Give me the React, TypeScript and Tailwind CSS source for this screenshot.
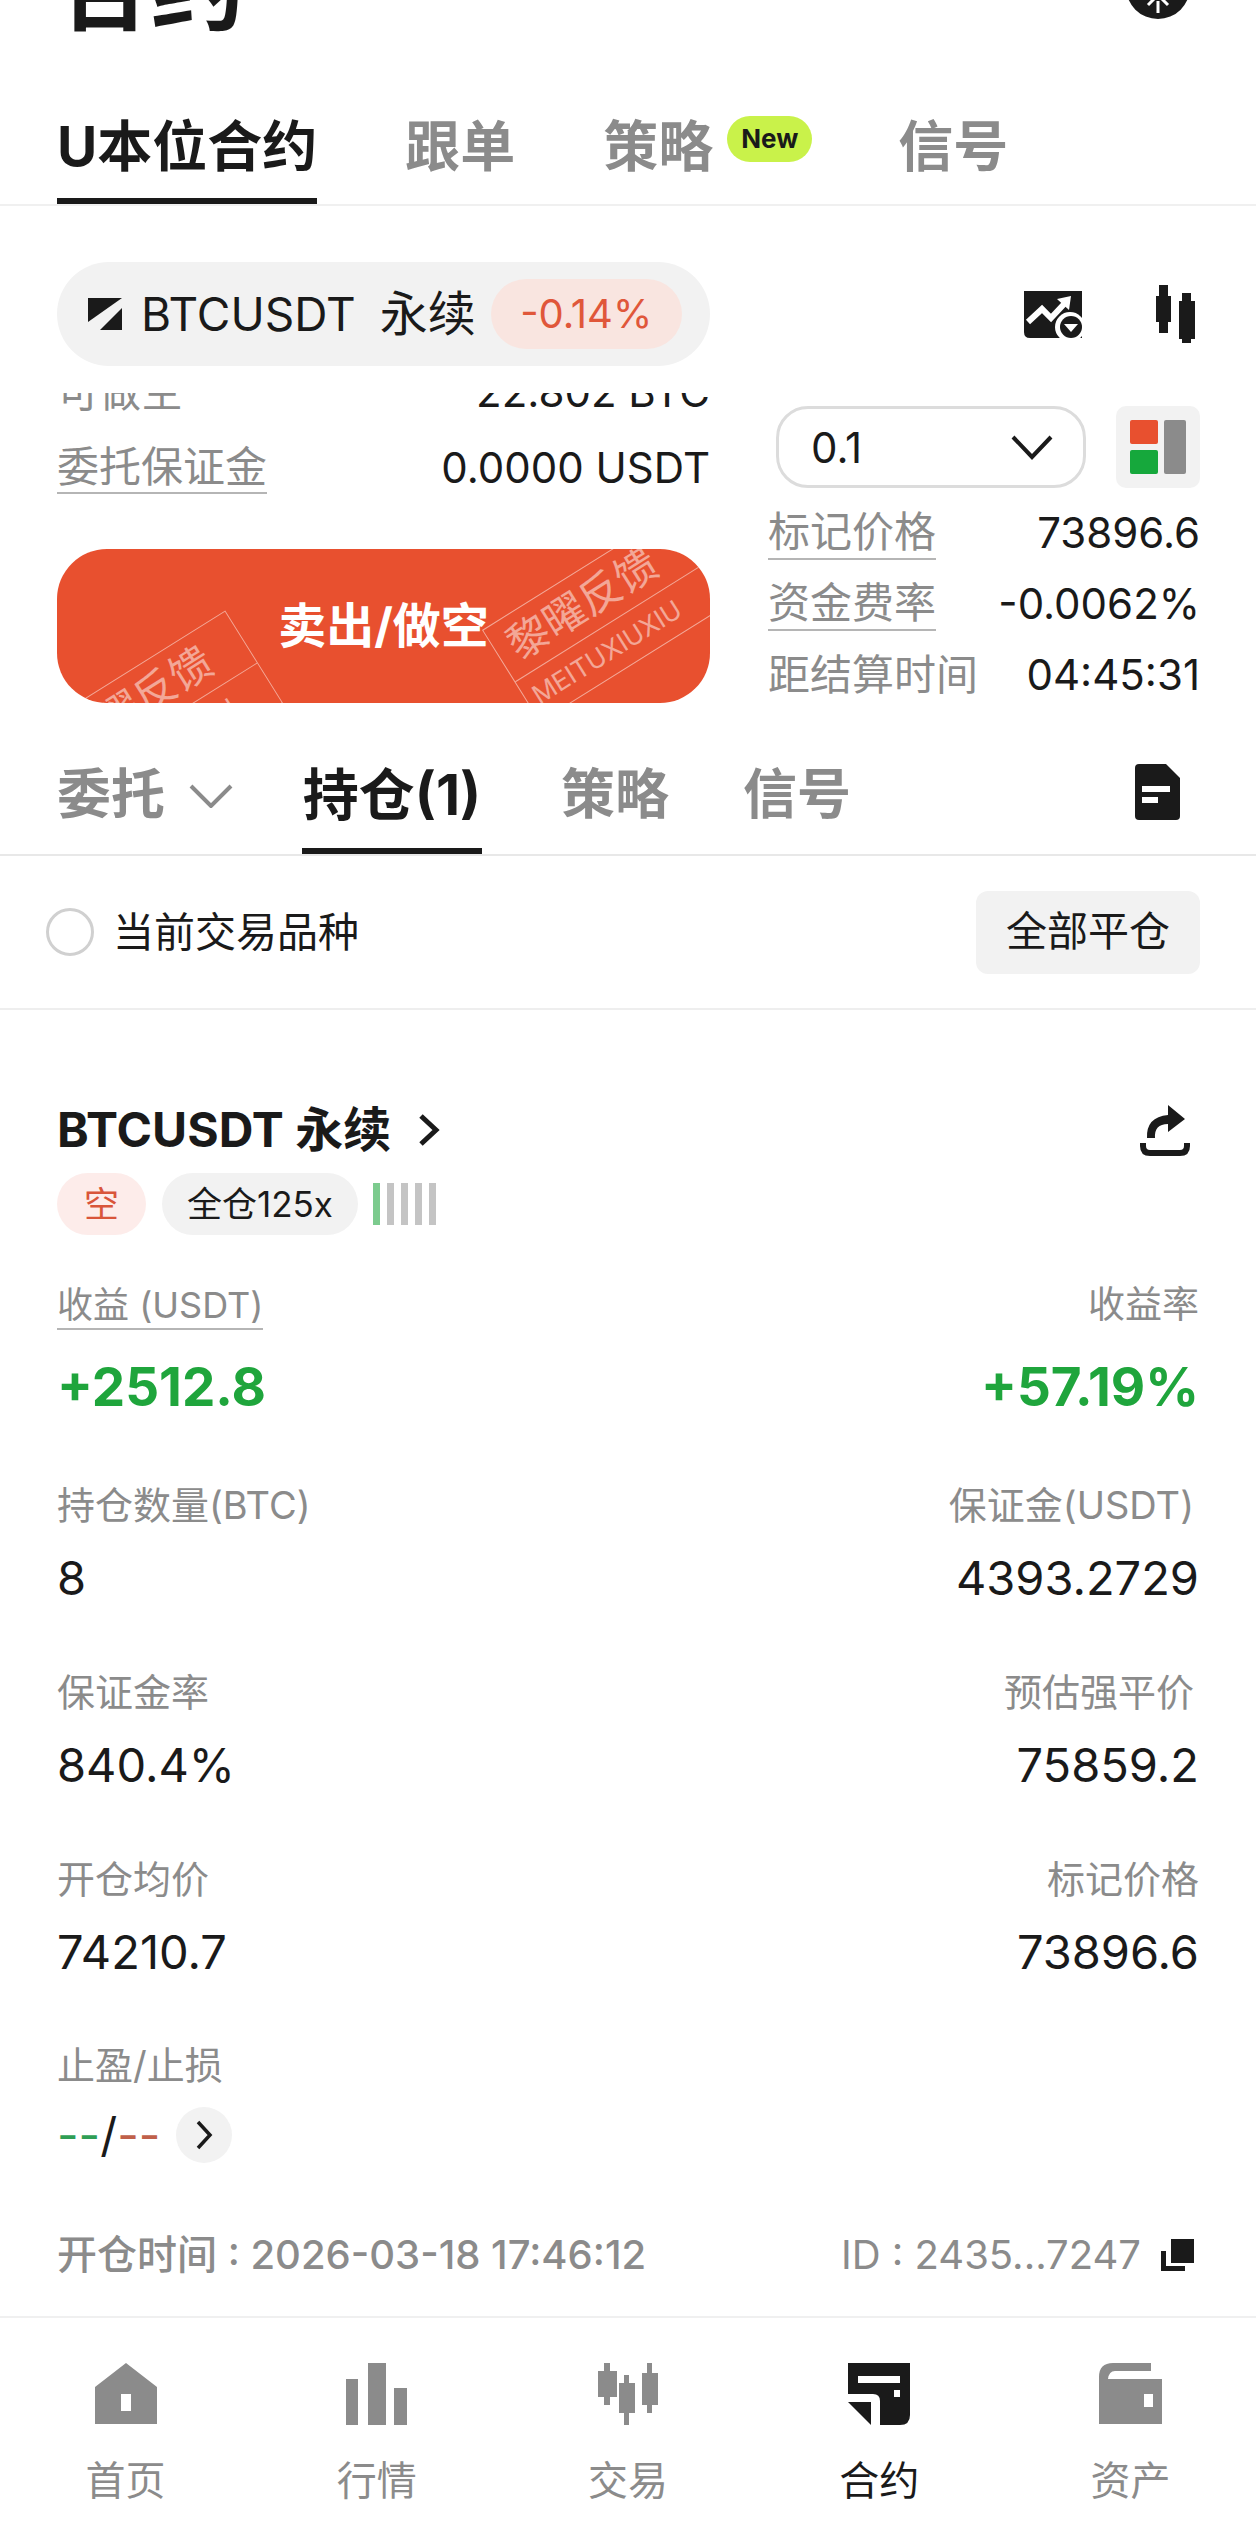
import type { ReactNode } from "react";

const FONT = "[font-family:Inter,'Noto_Sans_CJK_SC',sans-serif]";

function Stamp({ className }: { className: string }) {
  return (
    <div className={`absolute w-[222px] origin-center -rotate-[32deg] border border-white/50 text-white/50 ${className}`}>
      <div className="border-b border-white/50 pl-[14px] text-[42px] leading-[60px] font-normal">黎曜反馈</div>
      <div className="pl-[8px] text-[26px] leading-[46px] font-normal">MEITUXIUXIU</div>
    </div>
  );
}

function Stat({ label, value, right, inset }: { label: string; value: string; right?: boolean; inset?: boolean }) {
  return (
    <div className={`flex flex-col ${right ? "items-end" : "items-start"}`}>
      <span className={`text-[38px] leading-[46px] text-[#8b8b8b] ${inset ? "pr-[5px]" : ""}`}>{label}</span>
      <span className="mt-[27px] text-[47px] leading-[46px] text-[#1a1a1a]">{value}</span>
    </div>
  );
}

function InfoRow({ label, value, dotted = true }: { label: string; value: string; dotted?: boolean }) {
  return (
    <div className="flex h-[71px] items-center justify-between">
      <span className={`text-[42px] leading-[52px] text-[#8b8b8b] ${dotted ? "border-b-2 border-[#b5b5b5]" : ""}`}>{label}</span>
      <span className="text-[42px] leading-[52px] text-[#1a1a1a]">{value}</span>
    </div>
  );
}

function NavItem({ icon, label, active }: { icon: ReactNode; label: string; active?: boolean }) {
  return (
    <div className="flex flex-1 flex-col items-center">
      <div className="flex h-[62px] items-center justify-center">{icon}</div>
      <span className={`mt-[31px] text-[40px] leading-[50px] ${active ? "text-[#1a1a1a]" : "text-[#8b8b8b]"}`}>{label}</span>
    </div>
  );
}

const HomeIcon = (
  <svg width="62" height="62" viewBox="0 0 62 62">
    <path fillRule="evenodd" fill="#8b8b8b" d="M31 0 62 24V61H0V24ZM26 31V48H36V31Z" />
  </svg>
);
const BarsIcon = (
  <svg width="62" height="62" viewBox="0 0 62 62" fill="#8b8b8b">
    <rect x="0" y="16" width="12" height="46" />
    <rect x="22" y="0" width="18" height="62" />
    <rect x="48" y="25" width="13" height="37" />
  </svg>
);
const CandlesIcon = (
  <svg width="62" height="62" viewBox="0 0 62 62" fill="#8b8b8b">
    <path d="M7 0h6v8h7v26h-7v8H7v-8H1V8h6Z" />
    <path d="M27 12h5v8h6v30h-6v12h-5V50h-5V20h5Z" />
    <path d="M50 0h5v10h6v32h-6v8h-5v-8h-5V10h5Z" />
  </svg>
);
const ContractIcon = (
  <svg width="62" height="62" viewBox="0 0 62 62">
    <path fill="#1a1a1a" d="M0 0H62V52Q62 62 52 62H32V38Q32 31 25 31H0Z" />
    <path fill="#1a1a1a" d="M0 39H23V62Z" />
    <rect x="10" y="13" width="42" height="7" fill="#fff" />
    <rect x="46" y="27" width="6" height="7" fill="#fff" />
  </svg>
);
const WalletIcon = (
  <svg width="63" height="62" viewBox="0 0 63 62">
    <path fillRule="evenodd" fill="#8b8b8b" d="M0 61V14Q0 0 14 0H52V8H16Q10 8 9 16H63V61ZM45 31V44H54V31Z" />
  </svg>
);

export default function App() {
  return (
    <div className={`flex h-[2534px] w-[1256px] flex-col overflow-hidden bg-white ${FONT}`}>
      {/* title, scrolled off the top */}
      <div className="flex h-[36px] shrink-0 items-end justify-between overflow-hidden px-[57px]">
        <span className="text-[94px] leading-[94px] font-bold text-[#1a1a1a]">合约</span>
        <svg className="mb-[17px] mr-[9px] shrink-0" width="64" height="64" viewBox="0 0 64 64">
          <circle cx="32" cy="32" r="32" fill="#1a1a1a" />
          <path d="M32 46v12M22 50l6-6M42 50l-6-6" stroke="#fff" strokeWidth="3" />
        </svg>
      </div>

      {/* top tabs */}
      <div className="flex h-[170px] shrink-0 items-end gap-[88px] border-b-2 border-[#f0f0f0] px-[57px]">
        <div className="flex h-[88px] flex-col justify-between">
          <span className="text-[55px] leading-[60px] font-bold whitespace-nowrap text-[#1a1a1a]">U本位合约</span>
          <div className="h-[6px] bg-[#1a1a1a]" />
        </div>
        <div className="h-[88px] text-[55px] leading-[60px] font-bold text-[#8b8b8b]">跟单</div>
        <div className="flex h-[88px] items-start gap-[14px]">
          <span className="text-[55px] leading-[60px] font-bold text-[#8b8b8b]">策略</span>
          <span className="rounded-full bg-[#c9f24a] px-[14px] text-[26px] leading-[46px] font-bold text-[#1a1a1a]">New</span>
        </div>
        <div className="-ml-[2px] h-[88px] text-[55px] leading-[60px] font-bold text-[#8b8b8b]">信号</div>
      </div>

      {/* symbol bar */}
      <div className="flex h-[187px] shrink-0 items-start justify-between pt-[56px] pr-[61px] pl-[57px]">
        <div className="flex h-[104px] w-[653px] items-center rounded-full bg-[#f2f2f2] pl-[31px]">
          <svg className="shrink-0" width="34" height="32" viewBox="0 0 34 32" fill="#1a1a1a">
            <path d="M0 0H34L0 24Z" />
            <path d="M34 10V32H12Z" />
          </svg>
          <span className="ml-[19px] text-[46px] leading-[52px] text-[#1a1a1a]">BTCUSDT</span>
          <span className="ml-[24px] text-[48px] leading-[52px] text-[#1a1a1a]">永续</span>
          <span className="ml-[15px] flex h-[70px] w-[191px] shrink-0 items-center justify-center rounded-full bg-[#f9e5e0] text-[40px] text-[#e0573a]">-0.14%</span>
        </div>
        <div className="flex h-[104px] items-center gap-[74px]">
          <svg width="58" height="47" viewBox="0 0 58 47">
            <path fill="#1a1a1a" d="M0 0H58V47H6Q0 47 0 41Z" />
            <path d="M4 31 18 18l9 9 15-16" fill="none" stroke="#fff" strokeWidth="6" />
            <path d="M33 8 47 5 45 19Z" fill="#fff" />
            <circle cx="46" cy="36" r="15" fill="#fff" />
            <circle cx="47" cy="36" r="11" fill="#1a1a1a" />
            <path d="M40 33H54L47 41Z" fill="#fff" />
          </svg>
          <svg width="39" height="58" viewBox="0 0 39 58" fill="#1a1a1a">
            <path d="M3 0h9v11h3v26h-3v11H3V37H0V11h3Z" />
            <path d="M26 8h9v8h4v38h-4v4h-9v-4h-3V16h3Z" />
          </svg>
        </div>
      </div>

      {/* order form, clipped at its top by the bar above */}
      <div className="flex h-[340px] shrink-0 gap-[58px] overflow-hidden px-[57px]">
        <div className="flex w-[653px] shrink-0 flex-col">
          <div className="-mt-[20px] flex h-[42px] items-end justify-between overflow-hidden">
            <span className="text-[42px] leading-[46px] text-[#8b8b8b]">可做空</span>
            <span className="text-[42px] leading-[46px] text-[#1a1a1a]">22.802 BTC</span>
          </div>
          <div className="mt-[27px] flex h-[52px] items-center justify-between">
            <span className="border-b-2 border-[#b5b5b5] text-[42px] leading-[50px] text-[#8b8b8b]">委托保证金</span>
            <span className="text-[42px] leading-[50px] text-[#1a1a1a]">0.0000 USDT</span>
          </div>
          <div className="relative mt-[55px] flex h-[154px] items-center justify-center overflow-hidden rounded-[50px] bg-[#e8502f] text-[48px] font-bold text-white">
            卖出/做空
            <Stamp className="top-[14px] -right-[6px]" />
            <Stamp className="top-[112px] -left-[8px]" />
          </div>
        </div>
        <div className="flex w-[432px] shrink-0 flex-col">
          <div className="mt-[13px] flex h-[82px] gap-[30px] pl-[8px]">
            <div className="flex w-[310px] items-center justify-between rounded-[32px] border-[3px] border-[#dcdcdc] pr-[30px] pl-[32px]">
              <span className="text-[42px] text-[#1a1a1a]">0.1</span>
              <svg width="42" height="26" viewBox="0 0 42 26" fill="none" stroke="#1a1a1a" strokeWidth="4">
                <path d="M2 3 21 23 40 3" />
              </svg>
            </div>
            <div className="flex w-[84px] items-center justify-center rounded-[10px] bg-[#f2f2f2]">
              <svg width="56" height="54" viewBox="0 0 56 54">
                <rect x="0" y="0" width="28" height="24" rx="2" fill="#e8502f" />
                <rect x="0" y="30" width="28" height="24" rx="2" fill="#16a83c" />
                <rect x="34" y="0" width="22" height="54" rx="2" fill="#8b8b8b" />
              </svg>
            </div>
          </div>
          <div className="mt-[9px] flex flex-col">
            <InfoRow label="标记价格" value="73896.6" />
            <InfoRow label="资金费率" value="-0.0062%" />
            <InfoRow label="距结算时间" value="04:45:31" dotted={false} />
          </div>
        </div>
      </div>

      {/* position tabs */}
      <div className="flex h-[123px] shrink-0 items-end border-b-2 border-[#e8e8e8] pr-[76px] pl-[57px]">
        <div className="flex h-[90px] items-start">
          <span className="text-[54px] leading-[62px] font-bold text-[#8b8b8b]">委托</span>
          <svg className="mt-[20px] ml-[24px]" width="44" height="24" viewBox="0 0 44 24" fill="none" stroke="#8b8b8b" strokeWidth="4">
            <path d="M2 2 22 22 42 2" />
          </svg>
        </div>
        <div className="ml-[69px] flex h-[90px] w-[180px] flex-col items-center justify-between">
          <span className="text-[56px] leading-[62px] font-bold whitespace-nowrap text-[#1a1a1a]">持仓(1)</span>
          <div className="h-[6px] w-full bg-[#1a1a1a]" />
        </div>
        <span className="ml-[79px] h-[90px] text-[54px] leading-[62px] font-bold text-[#8b8b8b]">策略</span>
        <span className="ml-[74px] h-[90px] text-[54px] leading-[62px] font-bold text-[#8b8b8b]">信号</span>
        <svg className="mb-[34px] ml-auto" width="45" height="56" viewBox="0 0 45 56">
          <path fill="#1a1a1a" d="M4 0H31L45 14V52Q45 56 41 56H4Q0 56 0 52V4Q0 0 4 0Z" />
          <rect x="7" y="22" width="28" height="6" fill="#fff" />
          <rect x="7" y="33" width="16" height="6" fill="#fff" />
        </svg>
      </div>

      {/* current symbol filter */}
      <div className="flex h-[154px] shrink-0 items-center justify-between border-b-2 border-[#eeeeee] pr-[56px] pl-[46px]">
        <div className="flex items-center gap-[19px]">
          <div className="h-[48px] w-[48px] rounded-full border-[3px] border-[#d0d0d0]" />
          <span className="text-[41px] leading-[50px] text-[#1a1a1a]">当前交易品种</span>
        </div>
        <div className="flex h-[83px] w-[224px] items-center justify-center rounded-[12px] bg-[#f2f2f2] text-[41px] text-[#1a1a1a]">全部平仓</div>
      </div>

      {/* position card */}
      <div className="flex flex-1 flex-col px-[57px]">
        <div className="mt-[92px] flex h-[56px] items-center justify-between pr-[9px]">
          <div className="flex items-center gap-[27px]">
            <span className="text-[48px] leading-[56px] font-bold text-[#1a1a1a]">BTCUSDT 永续</span>
            <svg width="22" height="34" viewBox="0 0 22 34" fill="none" stroke="#1a1a1a" strokeWidth="5">
              <path d="M3 3 18 17 3 31" />
            </svg>
          </div>
          <svg width="50" height="51" viewBox="0 0 50 51">
            <path d="M28 0 45 14 28 27V19Q14 19 15 33H7Q6 12 28 10Z" fill="#1a1a1a" />
            <path d="M3 38V41Q3 48 10 48H40Q47 48 47 41V38" fill="none" stroke="#1a1a1a" strokeWidth="6" />
          </svg>
        </div>
        <div className="mt-[15px] flex h-[62px] items-center">
          <span className="flex h-[62px] w-[89px] items-center justify-center rounded-full bg-[#fdecea] text-[35px] text-[#d9553a]">空</span>
          <span className="ml-[16px] flex h-[62px] w-[196px] items-center justify-center rounded-full bg-[#f2f2f2] text-[35px] text-[#1a1a1a]">全仓125x</span>
          <div className="ml-[15px] flex gap-[7px]">
            <div className="h-[42px] w-[7px] bg-[#7ccb8e]" />
            <div className="h-[42px] w-[7px] bg-[#c4c4c4]" />
            <div className="h-[42px] w-[7px] bg-[#c4c4c4]" />
            <div className="h-[42px] w-[7px] bg-[#c4c4c4]" />
            <div className="h-[42px] w-[7px] bg-[#c4c4c4]" />
          </div>
        </div>

        <div className="mt-[47px] flex items-start justify-between">
          <div className="flex flex-col items-start">
            <span className="border-b-2 border-[#b5b5b5] text-[36px] leading-[46px] text-[#8b8b8b]">收益 (USDT)</span>
            <span className="mt-[27px] text-[53px] leading-[60px] font-bold text-[#1fa53c]">+2512.8</span>
          </div>
          <div className="flex flex-col items-end">
            <span className="text-[37px] leading-[46px] text-[#8b8b8b]">收益率</span>
            <span className="mt-[29px] text-[53px] leading-[60px] font-bold text-[#1fa53c]">+57.19%</span>
          </div>
        </div>

        <div className="mt-[65px] flex flex-col gap-[68px]">
          <div className="flex justify-between">
            <Stat label="持仓数量(BTC)" value="8" />
            <Stat label="保证金(USDT)" value="4393.2729" right inset />
          </div>
          <div className="flex justify-between">
            <Stat label="保证金率" value="840.4%" />
            <Stat label="预估强平价" value="75859.2" right inset />
          </div>
          <div className="flex justify-between">
            <Stat label="开仓均价" value="74210.7" />
            <Stat label="标记价格" value="73896.6" right />
          </div>
        </div>

        <span className="mt-[67px] text-[38px] leading-[46px] text-[#8b8b8b]">止盈/止损</span>
        <div className="mt-[19px] flex h-[56px] items-center">
          <span className="text-[47px] leading-[56px]">
            <span className="text-[#2f9e55]">--</span>
            <span className="text-[#1a1a1a]">/</span>
            <span className="text-[#c0604a]">--</span>
          </span>
          <div className="ml-[16px] flex h-[56px] w-[56px] items-center justify-center rounded-full bg-[#f2f2f2]">
            <svg width="18" height="30" viewBox="0 0 18 30" fill="none" stroke="#1a1a1a" strokeWidth="3.5">
              <path d="M3 2 15 15 3 28" />
            </svg>
          </div>
        </div>

        <div className="mt-[67px] flex h-[50px] items-center justify-between pr-[5px]">
          <span className="text-[40px] leading-[50px] font-medium whitespace-pre text-[#8b8b8b]">开仓时间 : 2026-03-18 17:46:12</span>
          <div className="flex items-center gap-[20px]">
            <span className="text-[40px] leading-[50px] whitespace-pre text-[#8b8b8b]">ID : 2435...7247</span>
            <svg width="33" height="32" viewBox="0 0 33 32" fill="#1a1a1a">
              <rect x="10" y="0" width="23" height="24" />
              <path d="M0 12H5V27H24V32H0Z" />
            </svg>
          </div>
        </div>
      </div>

      {/* bottom nav */}
      <div className="flex h-[218px] shrink-0 border-t-2 border-[#f0f0f0] pt-[45px]">
        <NavItem icon={HomeIcon} label="首页" />
        <NavItem icon={BarsIcon} label="行情" />
        <NavItem icon={CandlesIcon} label="交易" />
        <NavItem icon={ContractIcon} label="合约" active />
        <NavItem icon={WalletIcon} label="资产" />
      </div>
    </div>
  );
}
